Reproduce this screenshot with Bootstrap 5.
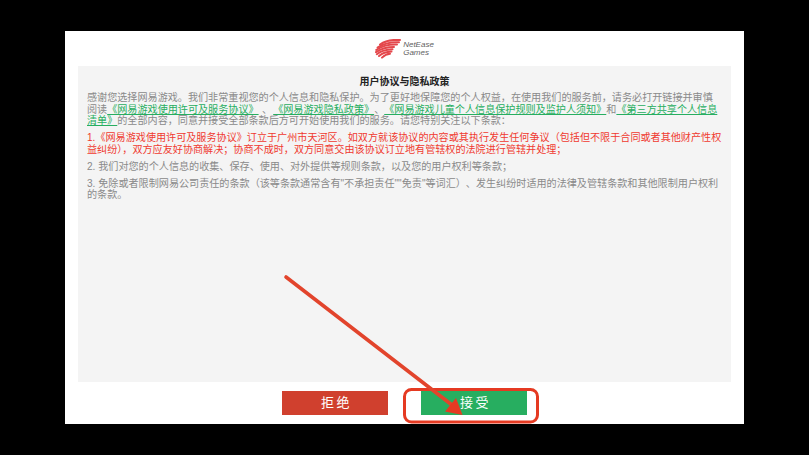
<!DOCTYPE html>
<html lang="zh">
<head>
<meta charset="utf-8">
<title>用户协议与隐私政策</title>
<link rel="stylesheet" href="https://cdn.jsdelivr.net/npm/bootstrap@5.3.0/dist/css/bootstrap.min.css">
<style>
html,body{height:100%;}
body{background:#000;font-family:"Liberation Sans","Noto Sans CJK SC",sans-serif;overflow:hidden;}
.stage{width:809px;height:455px;padding:31px 65px;}
.sheet{width:679px;height:393px;background:#fff;padding:0 13px 9px;}
.brand{height:35px;}
.brand-txt{font-size:8px;line-height:8px;font-style:italic;margin-left:2px;color:#5f5f5f;padding-top:1px;}
.terms{width:653px;height:316px;background:#f4f4f4;padding:10px 9px 0;font-size:10.1px;line-height:11.6px;color:#8a8a8a;font-family:"Liberation Sans","Noto Sans CJK SC",sans-serif;}
.terms-title{font-size:10px;line-height:12px;font-weight:700;color:#222;text-align:center;margin-bottom:4px;}
.terms p{margin:0 0 5.4px;}
.terms .untrimmed{text-spacing-trim:space-all;font-feature-settings:"chws" 0;}
.terms a{color:#27ae60;text-decoration:underline;}
.terms .warn{color:#f03a30;}
.sep-wide{margin-left:3.5px;padding-right:1px;}
.actions{gap:33px;padding-top:9px;}
.act{width:106px;height:24px;border-radius:0;border:0;padding:0 0 0 3px;color:#fff;font-size:13px;line-height:24px;letter-spacing:2.5px;font-family:"Liberation Sans","Noto Sans CJK SC",sans-serif;}
.act-no{background:#d0402e;}
.act-no:hover{background:#d0402e;color:#fff;}
.act-yes{background:#27ae60;}
.act-yes:hover{background:#27ae60;color:#fff;}
.mark-layer{position:absolute;left:0;top:0;pointer-events:none;}
</style>
</head>
<body>
<div class="stage">
  <div class="sheet">
    <div class="brand d-flex align-items-center justify-content-center">
      <svg width="26" height="20" viewBox="0 0 26 20" aria-hidden="true">
        <g fill="none" stroke="#e4474b" stroke-linecap="round" stroke-width="2">
          <path d="M25 1C18 .5 10 2 5 5.5"/>
          <path d="M24 3.2C16 2.8 8 4.8 2.5 8.5"/>
          <path d="M22 5.6C14 5.4 6 7.5 1.2 11"/>
          <path d="M19 8C13 8 6 9.8 1 13.2"/>
          <path d="M17.5 10.3C12 10.5 6 12 1.8 15.2"/>
          <path d="M16.5 12.6C12 12.8 7.5 14 4 17"/>
          <path d="M15 14.8C12 15 9.5 16.2 7 18.6"/>
        </g>
      </svg>
      <div class="brand-txt">NetEase<br>Games</div>
    </div>
    <div class="terms">
      <div class="terms-title">用户协议与隐私政策</div>
      <p class="untrimmed">感谢您选择网易游戏。我们非常重视您的个人信息和隐私保护。为了更好地保障您的个人权益，在使用我们的服务前，请务必打开链接并审慎阅读<a href="#">《网易游戏使用许可及服务协议》</a><span class="sep-wide">、</span><a href="#">《网易游戏隐私政策》</a>、<a href="#">《网易游戏儿童个人信息保护规则及监护人须知》</a>和<a href="#">《第三方共享个人信息<br>清单》</a>的全部内容，同意并接受全部条款后方可开始使用我们的服务。请您特别关注以下条款：</p>
      <p class="warn">1.《网易游戏使用许可及服务协议》订立于广州市天河区。如双方就该协议的内容或其执行发生任何争议（包括但不限于合同或者其他财产性权益纠纷），双方应友好协商解决；协商不成时，双方同意交由该协议订立地有管辖权的法院进行管辖并处理；</p>
      <p>2. 我们对您的个人信息的收集、保存、使用、对外提供等规则条款，以及您的用户权利等条款；</p>
      <p class="untrimmed">3. 免除或者限制网易公司责任的条款（该等条款通常含有"不承担责任""免责"等词汇）、发生纠纷时适用的法律及管辖条款和其他限制用户权利的条款。</p>
    </div>
    <div class="actions d-flex justify-content-center">
      <button type="button" class="btn act act-no">拒绝</button>
      <button type="button" class="btn act act-yes">接受</button>
    </div>
  </div>
</div>
<svg class="mark-layer" width="809" height="455" viewBox="0 0 809 455" aria-hidden="true">
  <rect x="404.5" y="389.5" width="133" height="32.5" rx="7" fill="none" stroke="#e53a22" stroke-width="3"/>
  <line x1="286" y1="277" x2="452" y2="405" stroke="#e2442c" stroke-width="3.6" stroke-linecap="round"/>
  <polygon points="462.5,415 445,411.5 456,398" fill="#e53a22"/>
</svg>
</body>
</html>
